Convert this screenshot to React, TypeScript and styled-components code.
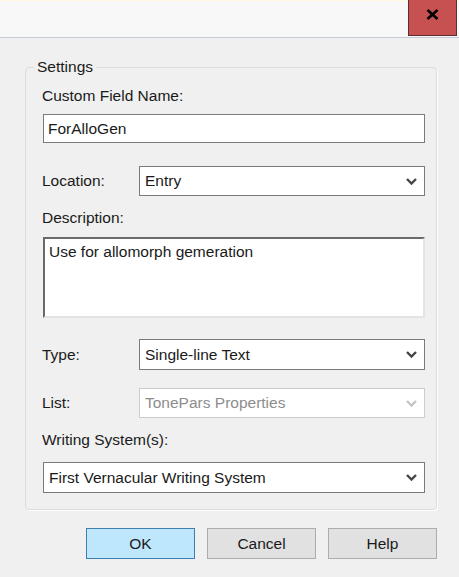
import styled, { createGlobalStyle } from "styled-components";

const GlobalStyle = createGlobalStyle`
  html, body {
    margin: 0;
    padding: 0;
    background: #f0f0f0;
  }
  body {
    font-family: "Liberation Sans", Arial, sans-serif;
    font-size: 15.5px;
    color: #1a1a1a;
  }
`;

const Window = styled.div`
  width: 459px;
  height: 577px;
  display: flex;
  flex-direction: column;
  background: #f0f0f0;
  overflow: hidden;
`;

const TitleBar = styled.div`
  height: 37px;
  display: flex;
  justify-content: flex-end;
  padding-right: 2px;
  background: linear-gradient(#fdf7e1 0 1px, #f8f8f8 1px);
  border-bottom: 1px solid #c4ccd7;
`;

const CloseButton = styled.div`
  width: 49px;
  height: 36px;
  display: flex;
  align-items: center;
  justify-content: center;
  padding-bottom: 6px;
  box-sizing: border-box;
  background: #c75050;
  border: 1px solid #5e2e2e;
  border-top: none;
`;

const Body = styled.div`
  padding: 0 22px 0 25px;
`;

const GroupBox = styled.fieldset`
  margin: 20px 0 0;
  padding: 11px 11px 16px 17px;
  border: 1px solid #d8dde3;
  border-radius: 4px;
  box-shadow: 1px 1px 0 #ffffff;
  min-width: 0;
`;

const Legend = styled.legend`
  margin-left: -9px;
  padding: 0 3px;
  line-height: 18px;
`;

const FieldLabel = styled.div<{ gap: number }>`
  margin: ${(p) => p.gap}px 0 0 -1px;
  line-height: 18px;
`;

const Row = styled.div<{ gap: number }>`
  margin-top: ${(p) => p.gap}px;
  display: flex;
  align-items: center;
`;

const InlineLabel = styled.div`
  width: 97px;
  margin-left: -1px;
  line-height: 18px;
`;

const TextBox = styled.div<{ gap: number }>`
  margin-top: ${(p) => p.gap}px;
  height: 29px;
  box-sizing: border-box;
  display: flex;
  align-items: center;
  padding: 0 5px 0 4px;
  background: #ffffff;
  border: 1px solid #7a7a7a;
`;

const MemoBox = styled.div<{ gap: number }>`
  margin-top: ${(p) => p.gap}px;
  height: 81px;
  box-sizing: border-box;
  padding: 4px 4px;
  line-height: 18px;
  background: #ffffff;
  border-top: 2px solid #6a6a6a;
  border-left: 2px solid #6a6a6a;
  border-right: 2px solid #e3e3e3;
  border-bottom: 2px solid #e3e3e3;
`;

const Combo = styled.div<{ gap?: number; disabled?: boolean; tall?: boolean }>`
  flex: 1;
  margin-top: ${(p) => p.gap ?? 0}px;
  height: ${(p) => (p.tall ? 31 : 30)}px;
  box-sizing: border-box;
  display: flex;
  align-items: center;
  justify-content: space-between;
  padding: 0 7px 0 5px;
  background: #ffffff;
  border: 1px solid ${(p) => (p.disabled ? "#cccccc" : "#7a7a7a")};
  color: ${(p) => (p.disabled ? "#8d8d8d" : "#1a1a1a")};
`;

const ButtonRow = styled.div`
  margin-top: 18px;
  display: flex;
  justify-content: flex-end;
  gap: 12px;
`;

const Button = styled.div<{ primary?: boolean }>`
  width: 109px;
  height: 31px;
  box-sizing: border-box;
  display: flex;
  align-items: center;
  justify-content: center;
  background: ${(p) => (p.primary ? "#bee6fd" : "#e1e1e1")};
  border: 1px solid ${(p) => (p.primary ? "#3c7fb1" : "#adadad")};
`;

function Chevron({ disabled }: { disabled?: boolean }) {
  return (
    <svg width="11" height="7" viewBox="0 0 11 7">
      <path
        d="M1 1 L5.5 5.5 L10 1"
        fill="none"
        stroke={disabled ? "#c4c4c4" : "#444444"}
        strokeWidth="2.4"
      />
    </svg>
  );
}

function CloseIcon() {
  return (
    <svg width="13" height="11" viewBox="0 0 13 11">
      <path d="M1.5 1 L11.5 10 M11.5 1 L1.5 10" stroke="#000000" strokeWidth="2.6" />
    </svg>
  );
}

function App() {
  return (
    <Window>
      <GlobalStyle />
      <TitleBar>
        <CloseButton>
          <CloseIcon />
        </CloseButton>
      </TitleBar>
      <Body>
        <GroupBox>
          <Legend>Settings</Legend>
          <FieldLabel gap={0}>Custom Field Name:</FieldLabel>
          <TextBox gap={9}>ForAlloGen</TextBox>

          <Row gap={23}>
            <InlineLabel>Location:</InlineLabel>
            <Combo>
              Entry
              <Chevron />
            </Combo>
          </Row>

          <FieldLabel gap={13}>Description:</FieldLabel>
          <MemoBox gap={10}>Use for allomorph gemeration</MemoBox>

          <Row gap={21}>
            <InlineLabel>Type:</InlineLabel>
            <Combo tall>
              Single-line Text
              <Chevron />
            </Combo>
          </Row>
          <Row gap={18}>
            <InlineLabel>List:</InlineLabel>
            <Combo disabled>
              TonePars Properties
              <Chevron disabled />
            </Combo>
          </Row>

          <FieldLabel gap={13}>Writing System(s):</FieldLabel>
          <Combo gap={13} tall>
            First Vernacular Writing System
            <Chevron />
          </Combo>
        </GroupBox>

        <ButtonRow>
          <Button primary>OK</Button>
          <Button>Cancel</Button>
          <Button>Help</Button>
        </ButtonRow>
      </Body>
    </Window>
  );
}

export default App;
